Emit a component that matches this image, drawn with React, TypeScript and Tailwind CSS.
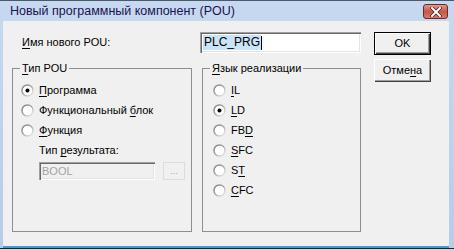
import React from "react";

const font = { fontFamily: '"Liberation Sans", Arial, sans-serif' };

function Mnemonic({ text, at }: { text: string; at: number }) {
	return (
		<>
			{text.slice(0, at)}
			<span className="underline underline-offset-[2px]">{text[at]}</span>
			{text.slice(at + 1)}
		</>
	);
}

function Radio({ checked }: { checked?: boolean }) {
	return (
		<svg width="13" height="13" viewBox="0 0 13 13" className="shrink-0">
			<defs>
				<linearGradient id="rg" x1="0" y1="0" x2="1" y2="1">
					<stop offset="0" stopColor="#7b7b7b" />
					<stop offset="0.5" stopColor="#a8a8a8" />
					<stop offset="1" stopColor="#f4f4f4" />
				</linearGradient>
			</defs>
			<circle cx="6.5" cy="6.5" r="5.5" fill="#ffffff" stroke="url(#rg)" strokeWidth="1.4" />
			{checked && <circle cx="6.5" cy="6.5" r="2" fill="#000000" />}
		</svg>
	);
}

function Option({
	text,
	at,
	checked,
}: {
	text: string;
	at: number;
	checked?: boolean;
}) {
	return (
		<div className="flex h-[20px] items-center gap-[5px]">
			<Radio checked={checked} />
			<span className="text-black">
				<Mnemonic text={text} at={at} />
			</span>
		</div>
	);
}

function Group({
	label,
	at,
	className,
	children,
}: {
	label: string;
	at: number;
	className: string;
	children: React.ReactNode;
}) {
	return (
		<div className={`relative border border-[#8e8e8e] ${className}`}>
			<span className="absolute -top-[8px] left-[7px] bg-[#f0f0f0] px-[2px] leading-[14px]">
				<Mnemonic text={label} at={at} />
			</span>
			{children}
		</div>
	);
}

const sunken =
	"shadow-[inset_1px_1px_0_#a0a0a0,inset_2px_2px_0_#696969,inset_-1px_-1px_0_#ffffff,inset_-2px_-2px_0_#e3e3e3]";

const raised =
	"shadow-[inset_1px_1px_0_#ffffff,inset_-1px_-1px_0_#404040,inset_-2px_-2px_0_#a0a0a0]";

export default function App() {
	return (
		<div
			className="flex h-[249px] w-[454px] flex-col border-y border-t-[#4b5a6b] border-b-[#1a2430] bg-gradient-to-b from-[#c6d9f0] to-[#b4cde9] text-[11px] text-black"
			style={font}
		>
			{/* title bar */}
			<div className="flex h-[20px] items-center justify-between pl-[10px] pr-[6px]">
				<span className="text-[12.5px] text-[#1d1150]">
					Новый программный компонент (POU)
				</span>
				<div className="mt-[1px] flex h-[15px] w-[25px] items-center justify-center rounded-[3px] border border-[#6e2a22] bg-gradient-to-b from-[#e09a8c] via-[#c8574a] to-[#d27a68]">
					<svg width="12" height="10" viewBox="0 0 12 10">
						<path
							d="M2 1 L10 9 M10 1 L2 9"
							stroke="#4a1a14"
							strokeWidth="3.4"
							strokeLinecap="square"
						/>
						<path
							d="M2 1 L10 9 M10 1 L2 9"
							stroke="#ffffff"
							strokeWidth="2"
							strokeLinecap="square"
						/>
					</svg>
				</div>
			</div>

			{/* client */}
			<div className="ml-[3px] mr-[5px] flex flex-1 gap-[13px] border-b-[2px] border-[#3a9fd0] bg-[#f0f0f0] pl-[9px] pt-[11px]">
				<div className="flex w-[349px] flex-col">
					<div className="flex h-[21px] items-center">
						<span className="w-[188px] pl-[10px]">
							<Mnemonic text="Имя нового POU:" at={0} />
						</span>
						<div
							className={`flex h-[21px] w-[161px] items-center bg-white pl-[3px] text-[12px] ${sunken}`}
						>
							<span className="bg-[#c9e4f7] px-[1px] leading-[15px]">
								PLC_PRG
							</span>
							<span className="h-[14px] w-[1px] bg-black" />
						</div>
					</div>

					<div className="mt-[15px] flex gap-[10px]">
						<Group label="Тип POU" at={0} className="h-[164px] w-[181px]">
							<div className="flex flex-col pl-[8px] pt-[11px]">
								<Option text="Программа" at={0} checked />
								<Option text="Функциональный блок" at={15} />
								<Option text="Функция" at={0} />
								<div className="mt-[1px] flex flex-col pl-[18px] text-black">
									<span className="h-[18px] leading-[18px]">
										<Mnemonic text="Тип результата:" at={4} />
									</span>
									<div className="mt-[3px] flex gap-[8px]">
										<div
											className={`flex h-[18px] w-[116px] items-center bg-[#f0f0f0] pl-[3px] text-[#a3a3a3] ${sunken}`}
										>
											BOOL
										</div>
										<div className="flex h-[18px] w-[22px] items-end justify-center border border-[#dcdcdc] bg-[#f0f0f0] pb-[3px] text-[9px] leading-none text-[#a3a3a3]">
											...
										</div>
									</div>
								</div>
							</div>
						</Group>
						<Group
							label="Язык реализации"
							at={0}
							className="h-[164px] w-[160px]"
						>
							<div className="flex flex-col pl-[10px] pt-[11px]">
								<Option text="IL" at={0} />
								<Option text="LD" at={0} checked />
								<Option text="FBD" at={2} />
								<Option text="SFC" at={0} />
								<Option text="ST" at={1} />
								<Option text="CFC" at={0} />
							</div>
						</Group>
					</div>
				</div>

				<div className="flex flex-col gap-[4px]">
					<button
						className={`flex h-[23px] w-[57px] items-center justify-center border border-black bg-[#f0f0f0] ${raised}`}
					>
						OK
					</button>
					<button
						className={`flex h-[23px] w-[57px] items-center justify-center bg-[#f0f0f0] ${raised}`}
					>
						<Mnemonic text="Отмена" at={4} />
					</button>
				</div>
			</div>
		</div>
	);
}
